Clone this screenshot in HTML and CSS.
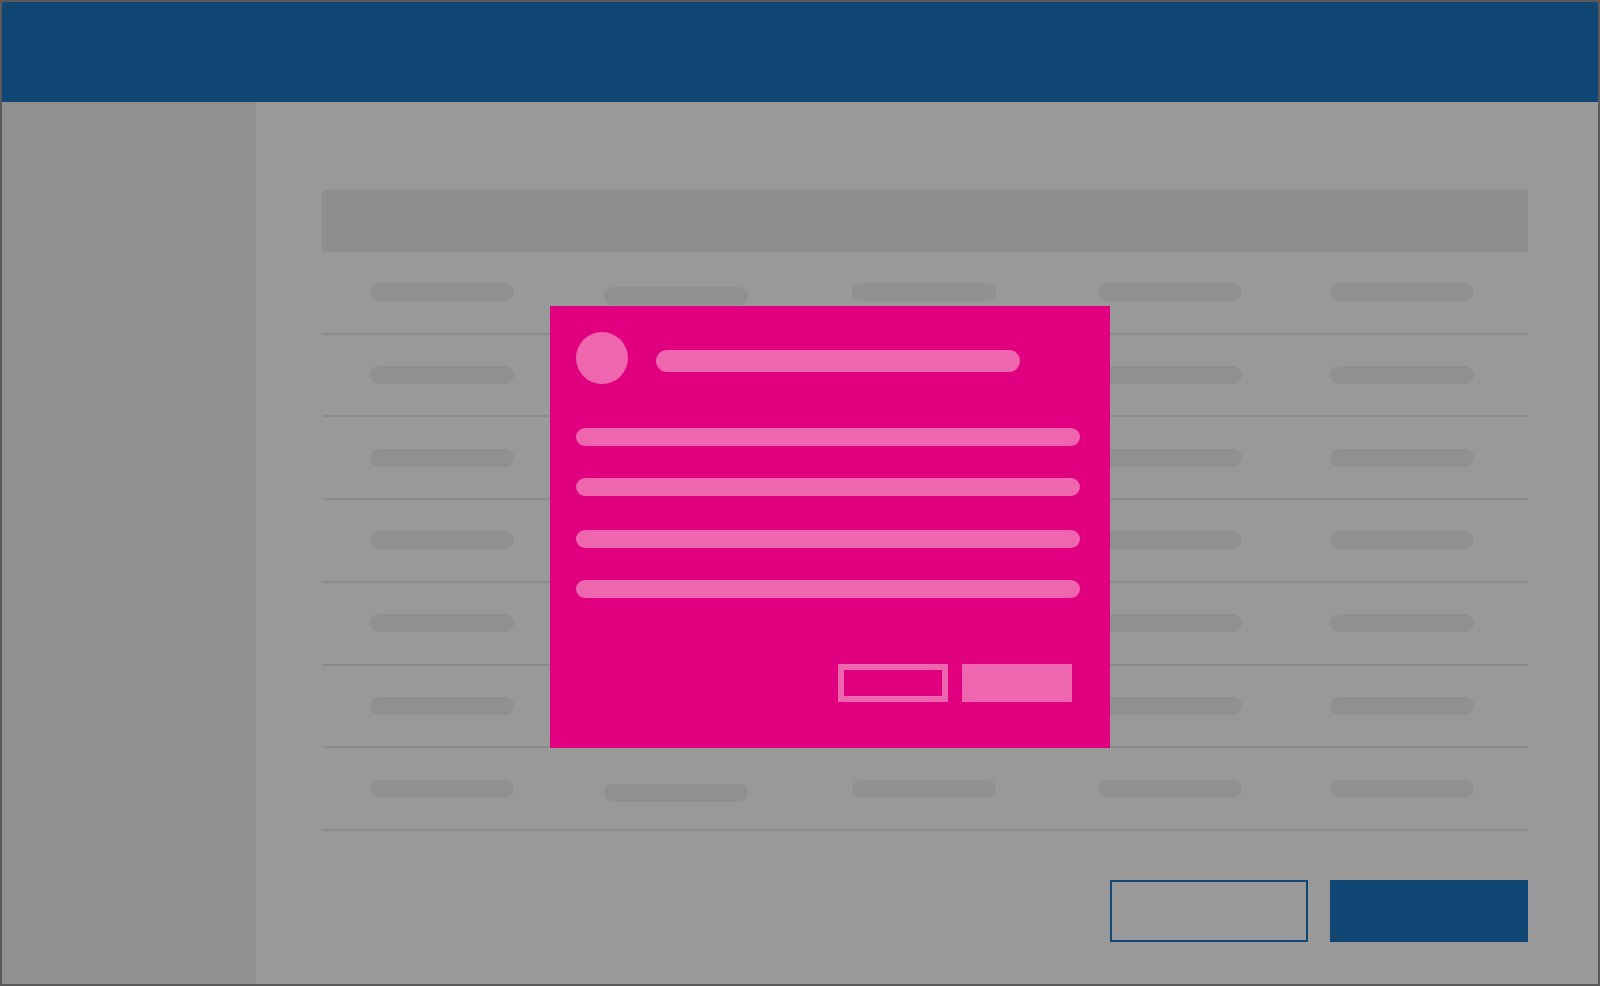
FILE: index.html
```html
<!DOCTYPE html>
<html lang="en">
<head>
    <meta charset="UTF-8">
    <meta name="viewport" content="width=device-width, initial-scale=1.0">
    <title>Dialog</title>
    <link rel="stylesheet" href="styles.css">
</head>
<body>
    <div class="frame">
        <header class="topbar"></header>
        <div class="layout">
            <aside class="sidebar"></aside>
            <main class="content">
                <div class="table">
                    <div class="table-head"></div>
                    <div class="table-body">
                        <div class="row"><span class="bar"></span><span class="bar low"></span><span class="bar"></span><span class="bar"></span><span class="bar"></span></div>
                        <div class="row"><span class="bar"></span><span class="bar"></span><span class="bar"></span><span class="bar"></span><span class="bar"></span></div>
                        <div class="row"><span class="bar"></span><span class="bar"></span><span class="bar"></span><span class="bar"></span><span class="bar"></span></div>
                        <div class="row"><span class="bar"></span><span class="bar"></span><span class="bar"></span><span class="bar"></span><span class="bar"></span></div>
                        <div class="row"><span class="bar"></span><span class="bar"></span><span class="bar"></span><span class="bar"></span><span class="bar"></span></div>
                        <div class="row"><span class="bar"></span><span class="bar"></span><span class="bar"></span><span class="bar"></span><span class="bar"></span></div>
                        <div class="row"><span class="bar"></span><span class="bar low"></span><span class="bar"></span><span class="bar"></span><span class="bar"></span></div>
                    </div>
                </div>
                <div class="actions">
                    <button type="button" class="btn btn-outline"></button>
                    <button type="button" class="btn btn-solid"></button>
                </div>
            </main>
        </div>
    </div>

    <div class="modal">
        <div class="modal-head">
            <span class="avatar"></span>
            <span class="title-bar"></span>
        </div>
        <div class="modal-lines">
            <span class="line"></span>
            <span class="line"></span>
            <span class="line line-wide-gap"></span>
            <span class="line"></span>
        </div>
        <div class="modal-actions">
            <button type="button" class="mbtn mbtn-outline"></button>
            <button type="button" class="mbtn mbtn-solid"></button>
        </div>
    </div>
</body>
</html>
```

FILE: styles.css
```css
body {
    margin: 0;
    padding: 0;
    font-family: 'Liberation Sans', Arial, sans-serif;
    background-color: #999999;
}

.frame {
    width: 1600px;
    height: 986px;
    box-sizing: border-box;
    border: 2px solid #5a5a5a;
    display: flex;
    flex-direction: column;
    overflow: hidden;
}

.topbar {
    height: 100px;
    flex-shrink: 0;
    background-color: #0f4673;
}

.layout {
    flex: 1;
    display: flex;
}

.sidebar {
    width: 254px;
    flex-shrink: 0;
    background-color: #909090;
}

.content {
    flex: 1;
    padding: 88px 70px 0 66px;
    background-color: #999999;
}

.table-head {
    height: 62px;
    background-color: #8f8f8f;
}

.table-body {
    height: 579px;
    display: grid;
    grid-template-rows: repeat(7, 1fr);
}

.row {
    display: grid;
    grid-template-columns: 234px 248px 246px 232px 1fr;
    align-items: center;
    padding-left: 48px;
    border-bottom: 2px solid #8a8a8a;
}

.bar {
    display: block;
    width: 144px;
    height: 18px;
    border-radius: 9px;
    background-color: #909090;
}

.bar.low {
    margin-top: 8px;
}

.actions {
    display: flex;
    justify-content: flex-end;
    gap: 22px;
    margin-top: 49px;
}

.btn {
    width: 198px;
    height: 62px;
    box-sizing: border-box;
    padding: 0;
    border: none;
}

.btn-outline {
    background-color: transparent;
    border: 2px solid #0f4673;
}

.btn-solid {
    background-color: #0f4673;
}

/* dialog */
.modal {
    position: absolute;
    left: 550px;
    top: 306px;
    width: 560px;
    height: 442px;
    box-sizing: border-box;
    padding: 26px 30px 0 26px;
    background-color: #e0007f;
}

.modal-head {
    display: flex;
    align-items: flex-start;
    gap: 28px;
}

.avatar {
    width: 52px;
    height: 52px;
    border-radius: 50%;
    background-color: #ee66ae;
}

.title-bar {
    width: 364px;
    height: 22px;
    margin-top: 18px;
    border-radius: 11px;
    background-color: #ee66ae;
}

.modal-lines {
    display: flex;
    flex-direction: column;
    margin-top: 44px;
}

.line {
    display: block;
    width: 504px;
    height: 18px;
    border-radius: 9px;
    background-color: #ee66ae;
    margin-top: 32px;
}

.line:first-child {
    margin-top: 0;
}

.line.line-wide-gap {
    margin-top: 34px;
}

.modal-actions {
    display: flex;
    justify-content: flex-end;
    gap: 14px;
    margin-top: 66px;
    padding-right: 8px;
}

.mbtn {
    width: 110px;
    height: 38px;
    box-sizing: border-box;
    padding: 0;
    border: none;
}

.mbtn-outline {
    background-color: transparent;
    border: 6px solid #ee66ae;
}

.mbtn-solid {
    background-color: #ee66ae;
}
```
